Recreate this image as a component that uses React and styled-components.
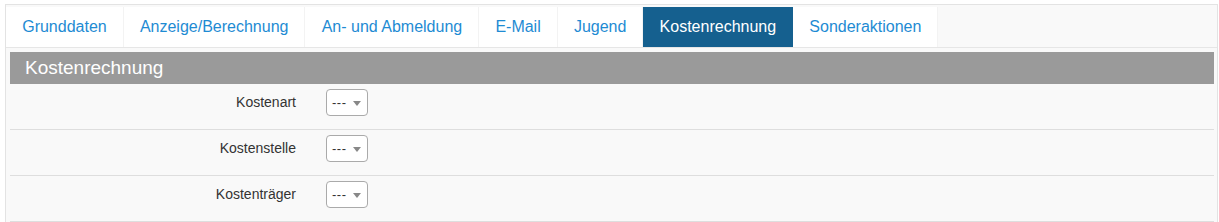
import React from "react";
import styled, { createGlobalStyle } from "styled-components";

const Global = createGlobalStyle`
  html, body { margin: 0; padding: 0; background: #ffffff; }
  body { font-family: "Liberation Sans", Arial, sans-serif; }
`;

const Panel = styled.div`
  margin: 4px 1px 0 5px;
  border: 1px solid #e3e3e3;
  border-bottom: none;
  background: #f9f9f9;
`;

const TabBar = styled.ul`
  list-style: none;
  margin: 0;
  padding: 2px 0 0 0;
  display: flex;
  border-bottom: 1px solid #e6e6e6;
`;

const Tab = styled.li`
  height: 40px;
  line-height: 40px;
  padding: 0 16px 0 16.2px;
  font-size: 16px;
  background: ${(p) => (p.$active ? "#15608f" : "#ffffff")};
  color: ${(p) => (p.$active ? "#ffffff" : "#1e8bd3")};
  border-right: 1px solid ${(p) => (p.$active ? "#15608f" : "#f3f3f3")};
  white-space: nowrap;
  cursor: pointer;
`;

const Content = styled.div`
  padding: 4px 3px 0 4px;
`;

const SectionHeader = styled.div`
  height: 32px;
  line-height: 31px;
  background: #9a9a9a;
  color: #ffffff;
  font-size: 19px;
  padding-left: 15px;
`;

const Row = styled.div`
  display: flex;
  height: 45px;
  border-bottom: 1px solid #dedede;
`;

const Label = styled.label`
  width: 286px;
  text-align: right;
  font-size: 14px;
  line-height: 20px;
  padding-top: 8px;
  color: #333333;
`;

const SelectBox = styled.div`
  margin: 5px 0 0 30px;
  height: 25px;
  width: 29px;
  border: 1px solid #aaaaaa;
  border-radius: 4px;
  background: #ffffff;
  display: flex;
  align-items: center;
  justify-content: space-between;
  padding: 0 6px 0 5px;
  box-sizing: content-box;
  font-size: 13px;
  letter-spacing: 0.5px;
  color: #333333;
`;

const Caret = styled.span`
  width: 0;
  height: 0;
  border-left: 4px solid transparent;
  border-right: 4px solid transparent;
  border-top: 5px solid #888888;
  margin-top: 1px;
`;

const tabs = [
  "Grunddaten",
  "Anzeige/Berechnung",
  "An- und Abmeldung",
  "E-Mail",
  "Jugend",
  "Kostenrechnung",
  "Sonderaktionen",
];

const fields = ["Kostenart", "Kostenstelle", "Kostenträger"];

export default function App() {
  return (
    <>
      <Global />
      <Panel>
        <TabBar>
          {tabs.map((t) => (
            <Tab key={t} $active={t === "Kostenrechnung"}>
              {t}
            </Tab>
          ))}
        </TabBar>
        <Content>
          <SectionHeader>Kostenrechnung</SectionHeader>
          {fields.map((f) => (
            <Row key={f}>
              <Label>{f}</Label>
              <SelectBox>
                <span>---</span>
                <Caret />
              </SelectBox>
            </Row>
          ))}
        </Content>
      </Panel>
    </>
  );
}
